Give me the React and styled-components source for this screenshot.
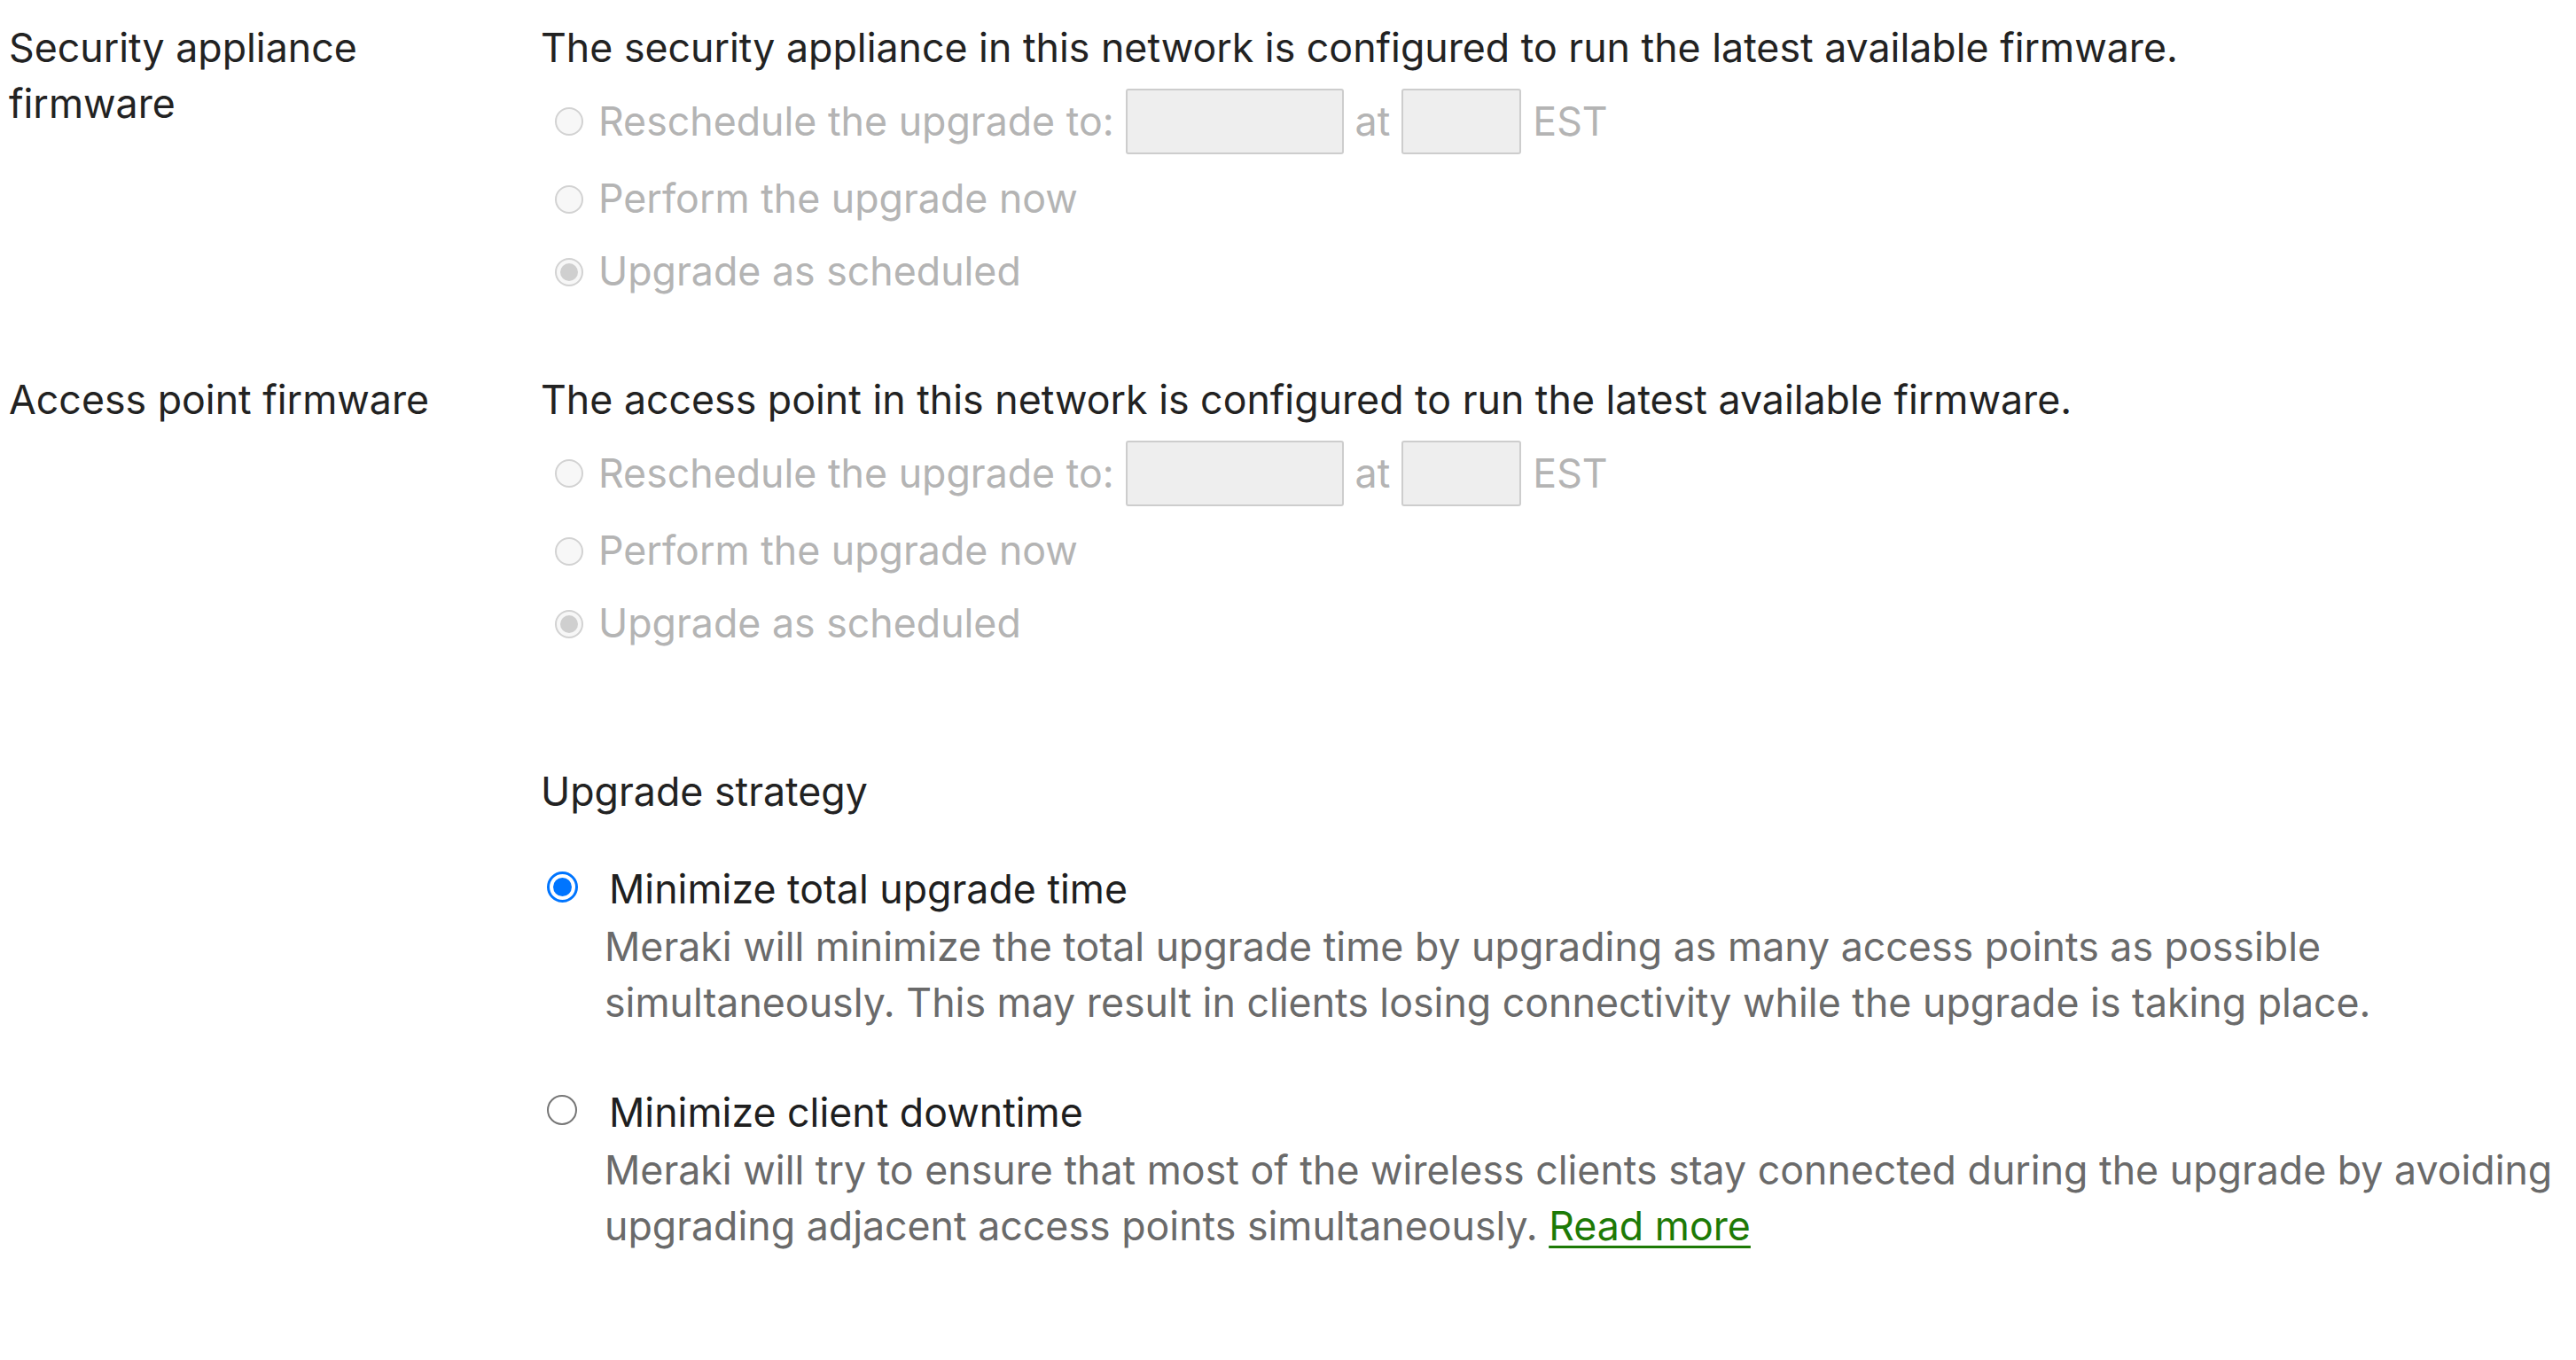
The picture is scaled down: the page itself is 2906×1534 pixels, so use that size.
import React from 'react'
import styled, { createGlobalStyle } from 'styled-components'

const GlobalStyle = createGlobalStyle`
  html, body {
    margin: 0;
    padding: 0;
    background: #ffffff;
  }
  body {
    font-family: Inter, "Noto Sans", sans-serif;
    font-size: 44.7px;
    line-height: 63px;
    color: #222222;
  }
`

const firmwareSections = [
  {
    label: 'Security appliance firmware',
    intro: 'The security appliance in this network is configured to run the latest available firmware.',
  },
  {
    label: 'Access point firmware',
    intro: 'The access point in this network is configured to run the latest available firmware.',
  },
]

function FirmwareSection({ label, intro }) {
  return (
    <Section>
      <Label>{label}</Label>
      <div>
        <Intro>{intro}</Intro>
        <Choices>
          <Choice>
            <Radio $size={32} $disabled />
            <ChoiceText>Reschedule the upgrade to:</ChoiceText>
            <Field $w={246} />
            <ChoiceText>at</ChoiceText>
            <Field $w={135} />
            <ChoiceText>EST</ChoiceText>
          </Choice>
          <Choice>
            <Radio $size={32} $disabled />
            <ChoiceText>Perform the upgrade now</ChoiceText>
          </Choice>
          <Choice>
            <Radio $size={32} $disabled $checked />
            <ChoiceText>Upgrade as scheduled</ChoiceText>
          </Choice>
        </Choices>
      </div>
    </Section>
  )
}

export default function App() {
  return (
    <Page>
      <GlobalStyle />
      {firmwareSections.map((s) => (
        <FirmwareSection key={s.label} label={s.label} intro={s.intro} />
      ))}

      <Strategy>
        <div />
        <div>
          <Intro>Upgrade strategy</Intro>
          <Options>
            <Option>
              <Radio $size={35} $checked $blue />
              <OptionTitle>Minimize total upgrade time</OptionTitle>
              <OptionDesc>
                Meraki will minimize the total upgrade time by upgrading as many access points as
                possible simultaneously. This may result in clients losing connectivity while the
                upgrade is taking place.
              </OptionDesc>
            </Option>
            <Option>
              <Radio $size={34} />
              <OptionTitle>Minimize client downtime</OptionTitle>
              <OptionDesc>
                Meraki will try to ensure that most of the wireless clients stay connected during
                the upgrade by avoiding upgrading adjacent access points simultaneously.{' '}
                <ReadMore href="#">Read more</ReadMore>
              </OptionDesc>
            </Option>
          </Options>
        </div>
      </Strategy>
    </Page>
  )
}

const Page = styled.div`
  padding: 23px 6px 60px 10px;
`

const Section = styled.div`
  display: grid;
  grid-template-columns: 600px 1fr;
  margin-bottom: 82px;
`

const Label = styled.div`
  color: #222222;
  max-width: 520px;
`

const Intro = styled.div`
  color: #222222;
`

const Choices = styled.div`
  display: flex;
  flex-direction: column;
  gap: 19px;
  padding-top: 14px;
`

const Choice = styled.div`
  display: flex;
  align-items: center;
  gap: 13px;
  min-height: 63px;
  padding-left: 16px;

  & > span:first-child {
    margin-right: 4px;
  }
`

const ChoiceText = styled.span`
  color: #b4b4b4;
  white-space: nowrap;
`

const Field = styled.span`
  display: block;
  width: ${(p) => p.$w}px;
  height: 74px;
  box-sizing: border-box;
  background: #eeeeee;
  border: 2px solid #cdcdcd;
  border-radius: 3px;
`

const Radio = styled.span`
  flex: none;
  display: block;
  position: relative;
  box-sizing: border-box;
  width: ${(p) => p.$size}px;
  height: ${(p) => p.$size}px;
  border-radius: 50%;
  border: ${(p) =>
    p.$blue ? '3px solid #0075ff' : p.$disabled ? '2.5px solid #d2d2d2' : '2.5px solid #767676'};
  background: ${(p) => (p.$disabled ? '#f7f7f7' : '#ffffff')};

  &::after {
    content: '';
    display: ${(p) => (p.$checked ? 'block' : 'none')};
    position: absolute;
    inset: 4px;
    border-radius: 50%;
    background: ${(p) => (p.$blue ? '#0075ff' : '#cfcfcf')};
  }
`

const Strategy = styled.div`
  display: grid;
  grid-template-columns: 600px 1fr;
  margin-top: 127px;
`

const Options = styled.div`
  display: flex;
  flex-direction: column;
  gap: 61px;
  margin-top: 47px;
`

const Option = styled.div`
  display: grid;
  grid-template-columns: 72px 1fr;

  & > span:first-child {
    margin-top: 11px;
    margin-left: 7px;
  }
`

const OptionTitle = styled.div`
  color: #1f1f1f;
  padding-left: 5px;
`

const OptionDesc = styled.div`
  grid-column: 2;
  margin-top: 2px;
  color: #6a6a6a;
`

const ReadMore = styled.a`
  color: #1d7a06;
  text-decoration: underline;
  text-decoration-thickness: 3px;
  text-underline-offset: 6px;
`
